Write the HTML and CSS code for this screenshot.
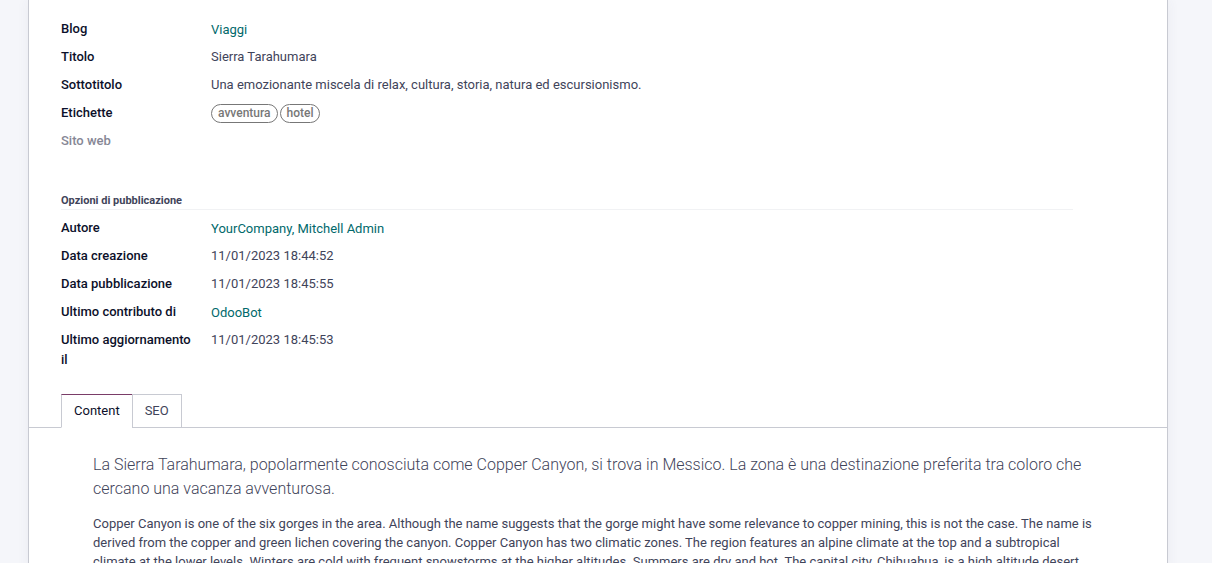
FILE: index.html
```html
<!DOCTYPE html>
<html lang="it">
<head>
<meta charset="utf-8">
<title>Sierra Tarahumara</title>
<link rel="stylesheet" href="styles.css">
</head>
<body>
<main class="sheet">
  <dl class="fields">
    <dt>Blog</dt><dd class="link"><a href="#">Viaggi</a></dd>
    <dt>Titolo</dt><dd>Sierra Tarahumara</dd>
    <dt>Sottotitolo</dt><dd>Una emozionante miscela di relax, cultura, storia, natura ed escursionismo.</dd>
    <dt>Etichette</dt><dd class="tags"><span class="tag">avventura</span><span class="tag">hotel</span></dd>
    <dt class="empty">Sito web</dt><dd></dd>
  </dl>
  <h2 class="group-title">Opzioni di pubblicazione</h2>
  <dl class="fields">
    <dt>Autore</dt><dd class="link"><a href="#">YourCompany, Mitchell Admin</a></dd>
    <dt>Data creazione</dt><dd>11/01/2023 18:44:52</dd>
    <dt>Data pubblicazione</dt><dd>11/01/2023 18:45:55</dd>
    <dt>Ultimo contributo di</dt><dd class="link"><a href="#">OdooBot</a></dd>
    <dt>Ultimo aggiornamento il</dt><dd>11/01/2023 18:45:53</dd>
  </dl>
  <div class="tabs" role="tablist">
    <button class="tab active" type="button" role="tab" aria-selected="true">Content</button>
    <button class="tab" type="button" role="tab" aria-selected="false">SEO</button>
  </div>
  <section class="content">
    <p class="lead">La Sierra Tarahumara, popolarmente conosciuta come Copper Canyon, si trova in Messico. La zona è una destinazione preferita tra coloro che cercano una vacanza avventurosa.</p>
    <p class="body-text">Copper Canyon is one of the six gorges in the area. Although the name suggests that the gorge might have some relevance to copper mining, this is not the case. The name is derived from the copper and green lichen covering the canyon. Copper Canyon has two climatic zones. The region features an alpine climate at the top and a subtropical climate at the lower levels. Winters are cold with frequent snowstorms at the higher altitudes. Summers are dry and hot. The capital city, Chihuahua, is a high altitude desert</p>
  </section>
</main>
</body>
</html>
```
FILE: styles.css
```css
* { box-sizing: border-box; }
html { height: 100%; }
body {
  margin: 0;
  height: 100%;
  padding: 0 44px 0 28px;
  overflow: hidden;
  background: #f5f6fa;
  color: #3f445a;
  font: 400 13px/20px Roboto, sans-serif;
}
.sheet {
  min-height: 100%;
  padding-top: 15px;
  background: #fff;
  border: 1px solid #c8cad2;
  border-width: 0 1px;
  box-shadow: 0 0 12px rgba(60, 70, 100, 0.06);
}
.fields {
  display: grid;
  grid-template-columns: 134px 1fr;
  column-gap: 16px;
  margin: 0 32px;
}
.fields dt, .fields dd { margin: 0; padding: 4px 0; min-height: 28px; }
.fields dt { color: #0c102a; font-weight: 500; }
.fields .empty { color: #868795; }
.fields .link { padding: 5px 0 3px; }
a { color: #01696b; text-decoration: none; }
.fields .tags { display: flex; align-items: center; gap: 2px; }
.tag {
  padding: 0 6px;
  border: 1px solid #777;
  border-radius: 10px;
  color: #777;
  font-size: 12px;
  font-weight: 500;
  line-height: 17px;
}
.group-title {
  margin: 36px 94px 4px 32px;
  padding-top: 1px;
  border-bottom: 1px solid #f1f2f4;
  font-size: 11px;
  font-weight: 700;
  line-height: 17px;
}
.tabs {
  display: flex;
  margin-top: 20px;
  padding-left: 32px;
  border-bottom: 1px solid #c8cad2;
}
.tab {
  margin: 0 0 -1px -1px;
  padding: 6px 12px;
  border: 1px solid #c8cad2;
  background: #fff;
  color: #3f445a;
  font: inherit;
}
.tab.active {
  margin-left: 0;
  border-top-color: #7a3d68;
  border-bottom-color: #fff;
  color: #0c102a;
}
.content { padding: 25px 64px 0; }
.lead { margin: 0 0 13px; font-size: 16px; font-weight: 300; line-height: 24px; }
.body-text { margin: 0; line-height: 19px; }
```
